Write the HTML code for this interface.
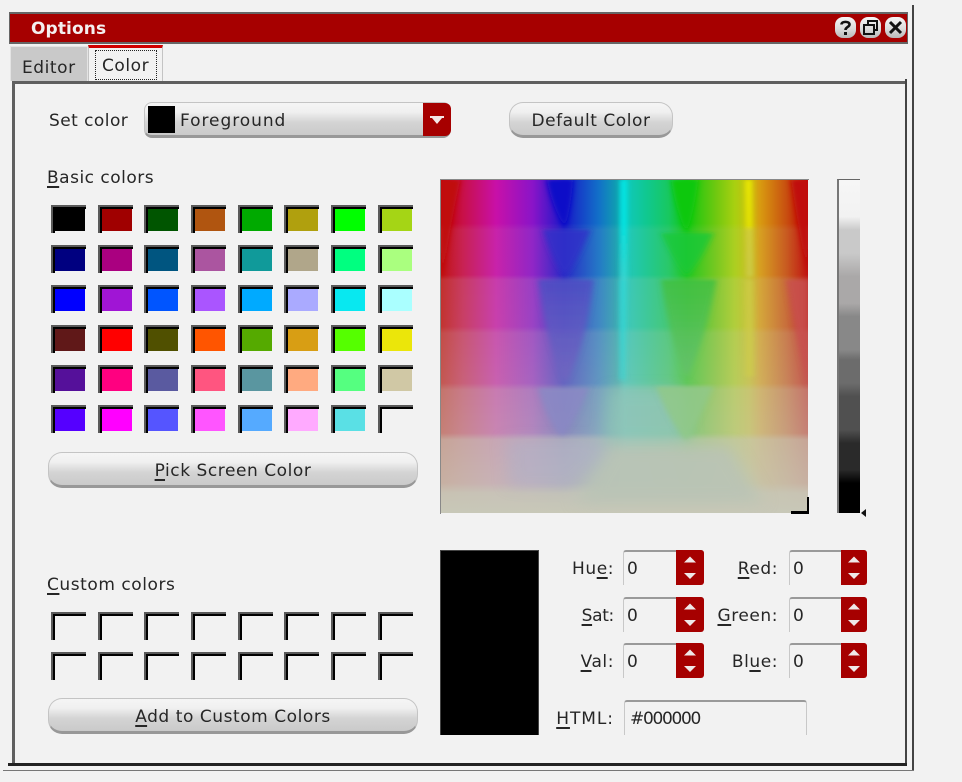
<!DOCTYPE html>
<html><head><meta charset="utf-8"><title>Options</title>
<style>
html,body{margin:0;padding:0;background:#f2f2f2}
body{width:962px;height:782px;position:relative;overflow:hidden;font:17px/20px "DejaVu Sans",sans-serif;color:#262626;letter-spacing:.55px}
.a,.t{position:absolute}
.t{white-space:nowrap}
u{text-decoration-thickness:2px;text-underline-offset:3px}
.r{text-align:right}
.grid{position:absolute;display:grid;grid-template-columns:repeat(8,46.7px);grid-auto-rows:40px}
.s{width:33px;height:26px;border-top:2px solid #5a5a5a;border-left:2px solid #5a5a5a;box-shadow:inset 2px 2px 0 #000;background:linear-gradient(currentColor,currentColor) 0 0/32px 24px no-repeat}
.e{background:none}
.btn{position:absolute;box-sizing:border-box;height:36px;border:1px solid #c4c4c4;border-bottom:3px solid #989898;border-radius:14px;background:linear-gradient(#f5f5f5 0,#f0f0f0 28%,#d4d4d4 60%,#cacaca 100%);text-align:center;line-height:37px}
.sb{position:absolute;width:81px;height:35px;box-sizing:border-box;border-top:2px solid #9a9a9a;border-left:1px solid #c8c8c8;border-radius:3px 3px 0 0}
.sb span{position:absolute;left:3px;top:7px}
.sb i{position:absolute;right:0;top:-2px;width:28px;height:35px;background:#a60000;border-radius:0 3px 3px 0}
.sb.n{width:78px}
.sb.n i{width:26px}
.sb svg{position:absolute;left:50%;top:0;margin-left:-9px}
.tb{position:absolute;top:17px;width:21px;height:21px;border-radius:8px;background:linear-gradient(#f6f6f6,#dcdcdc 55%,#b8b8b8)}
</style></head><body>

<!-- window chrome -->
<div class="a" style="left:9px;top:12px;width:899px;height:32px;background:#a60000;border:1px solid #666;border-width:2px 1px;box-sizing:border-box"></div>
<div class="t" style="left:31px;top:19px;color:#f4f0f0;font-weight:bold;letter-spacing:.1px">Options</div>
<div class="tb" style="left:835px"><svg width="21" height="21" viewBox="0 0 21 21"><path d="M6.500 7.500C6.500 4 14.500 4 14.500 7.500C14.500 10 10.500 10 10.500 13" fill="none" stroke="#111" stroke-width="2.600"/><rect x="9" y="15" width="3" height="3" fill="#111"/></svg></div>
<div class="tb" style="left:860px"><svg width="21" height="21" viewBox="0 0 21 21" fill="none" stroke="#111" stroke-width="2"><rect x="4" y="8" width="10" height="9"/><path d="M8 8V4H17V13H14"/></svg></div>
<div class="tb" style="left:885px"><svg width="21" height="21" viewBox="0 0 21 21"><path d="M5 5L16 16M16 5L5 16" stroke="#111" stroke-width="3" fill="none"/></svg></div>

<div class="a" style="left:912px;top:5px;width:2px;height:766px;background:#444"></div>
<div class="a" style="left:3px;top:770px;width:911px;height:1px;background:#777"></div>

<!-- tabs -->
<div class="a" style="left:10px;top:46px;width:78px;height:35px;background:#c9c9c9;border:1px solid #e4e4e4;border-bottom:0;box-sizing:border-box"></div>
<div class="t" style="left:22px;top:58px">Editor</div>
<div class="a" style="left:88px;top:45px;width:75px;height:36px;box-sizing:border-box;border-top:3px solid #d00000;border-right:1px solid #c4c4c4;border-left:1px solid #c4c4c4"></div>
<div class="a" style="left:95px;top:50px;width:62px;height:30px;box-sizing:border-box;border:1px dotted #222"></div>
<div class="t" style="left:102px;top:56px">Color</div>

<!-- pane -->
<div class="a" style="left:12px;top:81px;width:3px;height:683px;background:#5f5f5f"></div>
<div class="a" style="left:12px;top:81px;width:894px;height:3px;background:#5f5f5f"></div>
<div class="a" style="left:905px;top:79px;width:2px;height:686px;background:#444"></div>
<div class="a" style="left:8px;top:763px;width:899px;height:3px;background:#222"></div>

<!-- top row -->
<div class="t" style="left:49px;top:111px;letter-spacing:.45px">Set color</div>
<div class="btn" style="left:144px;top:102px;width:307px;border-radius:8px;text-align:left"></div>
<div class="a" style="left:148px;top:106px;width:27px;height:27px;background:#000"></div>
<div class="t" style="left:180px;top:111px;letter-spacing:.95px">Foreground</div>
<div class="a" style="left:423px;top:103px;width:28px;height:33px;background:#a60000;border-radius:0 6px 6px 0"></div>
<svg class="a" style="left:429px;top:114px" width="16" height="12"><path d="M1 2H15V4H13L8 10L3 4H1Z" fill="#f4e8e8"/></svg>
<div class="btn" style="left:509px;top:102px;width:164px">Default Color</div>

<!-- basic colors -->
<div class="t" style="left:47px;top:168px;letter-spacing:.5px"><u>B</u>asic colors</div>
<div class="grid" style="left:51px;top:205px">
<div class="s" style="color:#000000"></div><div class="s" style="color:#a00000"></div><div class="s" style="color:#005500"></div><div class="s" style="color:#b05510"></div><div class="s" style="color:#00aa00"></div><div class="s" style="color:#b0a00e"></div><div class="s" style="color:#00ff00"></div><div class="s" style="color:#a5d515"></div>
<div class="s" style="color:#000080"></div><div class="s" style="color:#aa0080"></div><div class="s" style="color:#005580"></div><div class="s" style="color:#ab55a0"></div><div class="s" style="color:#109a9a"></div><div class="s" style="color:#b0a68a"></div><div class="s" style="color:#00ff80"></div><div class="s" style="color:#aaff7f"></div>
<div class="s" style="color:#0000ff"></div><div class="s" style="color:#a015d5"></div><div class="s" style="color:#0055ff"></div><div class="s" style="color:#aa55ff"></div><div class="s" style="color:#00aaff"></div><div class="s" style="color:#aaaaff"></div><div class="s" style="color:#08e8f0"></div><div class="s" style="color:#aaffff"></div>
<div class="s" style="color:#601818"></div><div class="s" style="color:#ff0000"></div><div class="s" style="color:#505000"></div><div class="s" style="color:#ff5500"></div><div class="s" style="color:#55aa00"></div><div class="s" style="color:#d89e14"></div><div class="s" style="color:#55ff00"></div><div class="s" style="color:#ebe60a"></div>
<div class="s" style="color:#55109a"></div><div class="s" style="color:#ff0080"></div><div class="s" style="color:#5a5aa0"></div><div class="s" style="color:#ff5580"></div><div class="s" style="color:#5a96a0"></div><div class="s" style="color:#ffaa80"></div><div class="s" style="color:#55ff80"></div><div class="s" style="color:#d0c8a5"></div>
<div class="s" style="color:#5500ff"></div><div class="s" style="color:#ff00ff"></div><div class="s" style="color:#5555ff"></div><div class="s" style="color:#ff55ff"></div><div class="s" style="color:#55aaff"></div><div class="s" style="color:#ffaaff"></div><div class="s" style="color:#5ae0e5"></div><div class="s e"></div>
</div>
<div class="btn" style="left:48px;top:452px;width:370px"><u>P</u>ick Screen Color</div>

<!-- custom colors -->
<div class="t" style="left:47px;top:575px"><u>C</u>ustom colors</div>
<div class="grid" style="left:51px;top:612px">
<div class="s e"></div><div class="s e"></div><div class="s e"></div><div class="s e"></div><div class="s e"></div><div class="s e"></div><div class="s e"></div><div class="s e"></div>
<div class="s e"></div><div class="s e"></div><div class="s e"></div><div class="s e"></div><div class="s e"></div><div class="s e"></div><div class="s e"></div><div class="s e"></div>
</div>
<div class="btn" style="left:48px;top:698px;width:370px"><u>A</u>dd to Custom Colors</div>

<!-- picker -->
<div class="a" style="left:440px;top:179px;width:369px;height:335px;box-sizing:border-box;border-top:1px solid #888;border-left:1px solid #888"></div>
<svg class="a" style="left:441px;top:180px" width="367" height="333" viewBox="32 30 1104 1000" preserveAspectRatio="none">
<defs>
<linearGradient id="h">
<stop offset="0" stop-color="#c00000"/><stop offset=".06" stop-color="#c81048"/><stop offset=".15" stop-color="#c810a8"/><stop offset=".25" stop-color="#8a14c8"/><stop offset=".335" stop-color="#1818c8"/><stop offset=".43" stop-color="#1270c8"/><stop offset=".48" stop-color="#10a0b0"/><stop offset=".5" stop-color="#10c8c0"/><stop offset=".56" stop-color="#10c890"/><stop offset=".62" stop-color="#18c860"/><stop offset=".67" stop-color="#10c810"/><stop offset=".75" stop-color="#70c810"/><stop offset=".8" stop-color="#a8d010"/><stop offset=".84" stop-color="#c8c010"/><stop offset=".87" stop-color="#d89a10"/><stop offset=".94" stop-color="#c85010"/><stop offset="1" stop-color="#c00000"/>
</linearGradient>
<linearGradient id="o" x1="0" y1="0" x2="0" y2="1">
<stop offset="0" stop-color="#c8c8b8" stop-opacity="0"/>
<stop offset=".13" stop-color="#c8c8b8" stop-opacity="0"/>
<stop offset=".15" stop-color="#c8c8b8" stop-opacity=".1"/>
<stop offset=".285" stop-color="#c8c8b8" stop-opacity=".1"/>
<stop offset=".3" stop-color="#c8c8b8" stop-opacity=".24"/>
<stop offset=".44" stop-color="#c8c8b8" stop-opacity=".26"/>
<stop offset=".46" stop-color="#c8c8b8" stop-opacity=".38"/>
<stop offset=".61" stop-color="#c8c8b8" stop-opacity=".44"/>
<stop offset=".63" stop-color="#c8c8b8" stop-opacity=".58"/>
<stop offset=".76" stop-color="#c8c8b8" stop-opacity=".64"/>
<stop offset=".78" stop-color="#c8c8b8" stop-opacity=".82"/>
<stop offset=".91" stop-color="#c8c8b8" stop-opacity=".88"/>
<stop offset=".94" stop-color="#c8c8b8" stop-opacity=".97"/>
<stop offset="1" stop-color="#c8c8b8" stop-opacity="1"/>
</linearGradient>
<linearGradient id="bv" x1="0" y1="0" x2="0" y2="1"><stop offset="0" stop-color="#4e4ec4"/><stop offset="1" stop-color="#7468c0"/></linearGradient>
<linearGradient id="gv" x1="0" y1="0" x2="0" y2="1"><stop offset="0" stop-color="#40c040"/><stop offset="1" stop-color="#68c070"/></linearGradient>
<linearGradient id="cy" x1="0" y1="0" x2="0" y2="1"><stop offset="0" stop-color="#00ecec"/><stop offset=".5" stop-color="#00ecec"/><stop offset="1" stop-color="#40dcd8"/></linearGradient>
<linearGradient id="ye" x1="0" y1="0" x2="0" y2="1"><stop offset="0" stop-color="#f0f000"/><stop offset=".48" stop-color="#e8e800"/><stop offset=".52" stop-color="#d4d040"/><stop offset="1" stop-color="#cccc50"/></linearGradient>
<filter id="b1" x="-30%" y="-30%" width="160%" height="160%"><feGaussianBlur stdDeviation="9 5"/></filter>
<filter id="b2" x="-30%" y="-30%" width="160%" height="160%"><feGaussianBlur stdDeviation="24 20"/></filter>
</defs>
<rect x="32" y="30" width="1104" height="1000" fill="url(#h)"/>
<rect x="32" y="30" width="1104" height="1000" fill="url(#o)"/>
<!-- large soft regions -->
<g filter="url(#b2)">
<path d="M540 660H760Q770 740 770 815H530Z" fill="#90c4b8" opacity=".75"/>
<path d="M230 810H500L525 850L420 950H240Z" fill="#b0b0c8" opacity=".55"/>
<path d="M540 830H900L1000 1000H440Z" fill="#b9c3b6" opacity=".9"/>
</g>
<!-- saturated wedges left by banding -->
<g filter="url(#b1)">
<path d="M350 30H430Q425 110 405 175Q365 110 350 30Z" fill="#0808c8"/>
<path d="M340 180H480Q445 270 405 320Q365 270 340 180Z" fill="#3030c8" opacity=".8"/>
<path d="M325 330H490Q470 520 405 640Q345 500 325 330Z" fill="url(#bv)" opacity=".85"/>
<path d="M325 655H475Q445 740 395 800Q345 740 325 655Z" fill="#8a88c4" opacity=".85"/>
<path d="M725 30H805Q795 120 770 190Q735 110 725 30Z" fill="#10c810"/>
<path d="M695 190H850Q815 270 770 320Q725 260 695 190Z" fill="#18c838" opacity=".8"/>
<path d="M695 330H860Q830 500 770 625Q715 490 695 330Z" fill="url(#gv)" opacity=".85"/>
<path d="M680 650H850Q815 740 770 815Q710 740 680 650Z" fill="#90c888" opacity=".85"/>
<path d="M32 30H90Q60 170 37 320H32Z" fill="#c00808"/>
<path d="M1085 30H1136V320Q1105 170 1085 30Z" fill="#c00808"/>
<path d="M1070 330H1136V650Q1095 480 1070 330Z" fill="#c85050" opacity=".8"/>
<path d="M573 30H590L588 330H574Z" fill="url(#cy)"/>
<path d="M570 330H588L582 630H572Z" fill="#30dcdc" opacity=".85"/>
<path d="M948 30H966L970 320H952Z" fill="url(#ye)"/>
<path d="M948 330H970L972 620H950Z" fill="#cfcf48" opacity=".7"/>
</g>
</svg>
<div class="a" style="left:791px;top:511px;width:18px;height:3px;background:#000"></div>
<div class="a" style="left:807px;top:497px;width:2px;height:17px;background:#000"></div>

<!-- value strip -->
<div class="a" style="left:837px;top:179px;width:23px;height:334px;box-sizing:border-box;border-top:1px solid #666;border-left:2px solid #777;background:linear-gradient(#f6f6f6 0,#f2f2f2 11%,#c9c9c9 15%,#c9c9c9 22%,#aaa8a8 29%,#aaa8a8 37%,#888 41%,#888 51%,#6c6c6c 54%,#6c6c6c 61%,#505050 65%,#505050 75%,#2a2a2a 79%,#2a2a2a 87%,#000 91%,#000 100%)"></div>
<svg class="a" style="left:860px;top:507px" width="8" height="12"><path d="M1 6L6 2V10Z" fill="#111"/></svg>

<!-- preview -->
<div class="a" style="left:440px;top:550px;width:99px;height:185px;background:#000;box-sizing:border-box;border:1px solid #444;border-bottom:0"></div>

<!-- spin labels -->
<div class="t r" style="right:348px;top:559px">Hu<u>e</u>:</div>
<div class="t r" style="right:348px;top:606px;letter-spacing:-.3px"><u>S</u>at:</div>
<div class="t r" style="right:348px;top:652px"><u>V</u>al:</div>
<div class="t r" style="right:348px;top:709px;letter-spacing:.95px"><u>H</u>TML:</div>
<div class="t r" style="right:184px;top:559px"><u>R</u>ed:</div>
<div class="t r" style="right:184px;top:606px"><u>G</u>reen:</div>
<div class="t r" style="right:184px;top:652px">Bl<u>u</u>e:</div>

<!-- spin boxes -->
<div class="sb" style="left:623px;top:550px"><span>0</span><i><svg width="18" height="35"><path d="M9 6.500L15 12.500H3Z" fill="#f0e8e8"/><path d="M3 23H15L9 29Z" fill="#f0e8e8"/></svg></i></div>
<div class="sb" style="left:623px;top:597px"><span>0</span><i><svg width="18" height="35"><path d="M9 6.500L15 12.500H3Z" fill="#f0e8e8"/><path d="M3 23H15L9 29Z" fill="#f0e8e8"/></svg></i></div>
<div class="sb" style="left:623px;top:643px"><span>0</span><i><svg width="18" height="35"><path d="M9 6.500L15 12.500H3Z" fill="#f0e8e8"/><path d="M3 23H15L9 29Z" fill="#f0e8e8"/></svg></i></div>
<div class="sb n" style="left:789px;top:550px"><span>0</span><i><svg width="18" height="35"><path d="M9 6.500L15 12.500H3Z" fill="#f0e8e8"/><path d="M3 23H15L9 29Z" fill="#f0e8e8"/></svg></i></div>
<div class="sb n" style="left:789px;top:597px"><span>0</span><i><svg width="18" height="35"><path d="M9 6.500L15 12.500H3Z" fill="#f0e8e8"/><path d="M3 23H15L9 29Z" fill="#f0e8e8"/></svg></i></div>
<div class="sb n" style="left:789px;top:643px"><span>0</span><i><svg width="18" height="35"><path d="M9 6.500L15 12.500H3Z" fill="#f0e8e8"/><path d="M3 23H15L9 29Z" fill="#f0e8e8"/></svg></i></div>

<div class="a" style="left:624px;top:700px;width:183px;height:35px;box-sizing:border-box;border:1px solid #c8c8c8;border-top:2px solid #9a9a9a;border-bottom:0;border-radius:3px 3px 0 0"></div>
<div class="t" style="left:630px;top:709px;letter-spacing:-1.3px">#000000</div>

</body></html>
